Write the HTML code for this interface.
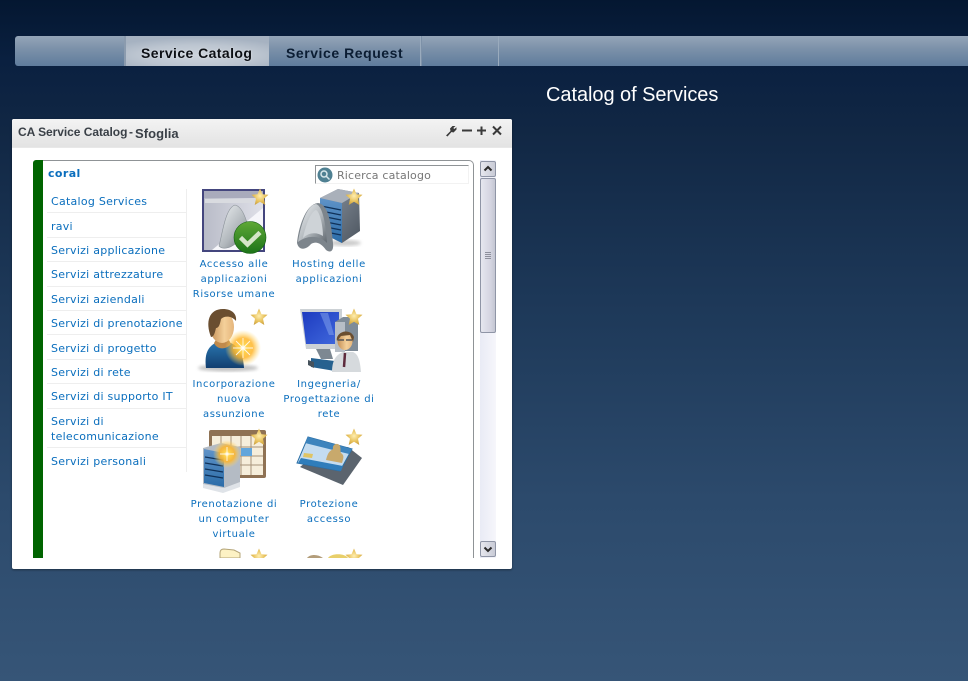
<!DOCTYPE html>
<html><head><meta charset="utf-8"><style>
html,body{margin:0;padding:0}
body{width:968px;height:681px;overflow:hidden;position:relative;background:linear-gradient(180deg,#041731 0,#0a2040 60px,#112744 130px,#1d3858 300px,#2c4a6c 500px,#365577 681px);font-family:"DejaVu Sans",sans-serif}
.abs,.t,.n,.sep{position:absolute}
#nav{position:absolute;left:15px;top:36px;width:953px;height:30px;border-radius:3px 0 0 3px;background:linear-gradient(180deg,#94a5b8 0,#7d92aa 40%,#5f7c9c 100%)}
#tab1{position:absolute;left:124px;top:36px;width:145px;height:30px;background:radial-gradient(ellipse 70% 60% at 50% 65%,#ccd3dc 0,#bcc5d0 60%,#a6b2c1 100%);border-left:2px solid #8b9bae;box-sizing:border-box}
.navt{position:absolute;top:45px;font:bold 14px/16px "Liberation Sans",sans-serif;white-space:nowrap}
.sep{top:36px;width:1px;height:30px;background:#9aabbd}
#title{position:absolute;left:546px;top:83px;color:#fff;font:20px/24px "Liberation Sans",sans-serif;white-space:nowrap;letter-spacing:-.06px}
#win{position:absolute;left:12px;top:119px;width:500px;height:450px;background:#fff;border-radius:2px;box-shadow:0 1px 2px rgba(0,0,0,.4)}
#head{position:absolute;left:0;top:0;width:500px;height:29px;background:linear-gradient(180deg,#f3f3f3,#e3e3e3);border-radius:2px 2px 0 0;border-bottom:1px solid #e8e8e8;box-sizing:border-box}
.ht{position:absolute;font:bold 12px/16px "Liberation Sans",sans-serif;color:#3a4047;white-space:nowrap}
#green{position:absolute;left:33px;top:160px;width:10px;height:398px;background:#006400;border-radius:3px 0 0 0}
#panel{position:absolute;left:43px;top:160px;width:431px;height:398px;border-top:1px solid #8f9396;border-right:1px solid #8f9396;box-sizing:border-box;border-radius:0 5px 0 0}
#search{position:absolute;left:315px;top:165px;width:154px;height:19px;border-top:1px solid #8f9396;border-left:1px solid #8f9396;border-right:1px solid #f2f2f2;border-bottom:1px solid #f2f2f2;box-sizing:border-box}
#search span{position:absolute;left:21px;top:3px;font:11px/14px "DejaVu Sans",sans-serif;color:#777;letter-spacing:.16px;white-space:nowrap}
#coral{position:absolute;left:48px;top:167px;font:bold 11px/14px "DejaVu Sans",sans-serif;color:#0a6ebd;letter-spacing:.4px}
.m{position:absolute;left:51px;font:11px/15px "DejaVu Sans",sans-serif;color:#0a6ebd;white-space:nowrap;letter-spacing:.26px}
.l{position:absolute;left:47px;width:139px;height:1px;background:#eeeeee}
#vl{position:absolute;left:186px;top:189px;width:1px;height:283px;background:#eeeeee}
.n{font:10px/15px "DejaVu Sans",sans-serif;color:#0a6ebd;text-align:center;letter-spacing:.62px;white-space:nowrap;width:100px}
svg{position:absolute;overflow:visible}
#clip{position:absolute;left:190px;top:540px;width:190px;height:18px;overflow:hidden}
#sb{position:absolute;left:480px;top:160px;width:16px;height:398px;background:linear-gradient(90deg,#e9ebf5,#f6f6fb)}
.btn{position:absolute;left:0;width:16px;height:16px;box-sizing:border-box;border:1px solid #8f95a6;border-radius:2px;background:linear-gradient(90deg,#e6e7ee,#c9cbd6)}
#thumb{position:absolute;left:0;top:18px;width:16px;height:155px;box-sizing:border-box;border:1px solid #8f95a6;border-radius:2px;background:linear-gradient(90deg,#e6e7ef,#d3d4e0 70%,#c4c6d2)}
</style></head><body>
<div id="nav"></div><div id="tab1"></div>
<div class="navt" style="left:141px;color:#0c0f14;letter-spacing:.42px;text-shadow:0 0 2px rgba(255,255,255,.5)">Service Catalog</div>
<div class="navt" style="left:286px;color:#0b1d33;letter-spacing:.55px">Service Request</div>
<div class="sep" style="left:420px"></div><div class="sep" style="left:421px;background:#7d91a8"></div><div class="sep" style="left:498px"></div>
<div id="title">Catalog of Services</div>
<div id="win"><div id="head">
<div class="ht" style="left:6px;top:5px;letter-spacing:-.05px">CA Service Catalog</div>
<div class="ht" style="left:117px;top:5px">-</div>
<div class="ht" style="left:123px;top:7px;font-size:13px;letter-spacing:.05px">Sfoglia</div>
<svg style="left:433px;top:6px" width="60" height="12" viewBox="0 0 60 12">
<path d="M1 10.500L5.500 6 5 3.500 7.500 1 10.500 1 8.300 3 9.300 4 11.500 2.300 11.500 4.500 8.500 7.500 6.500 7 2.500 11.500Z" fill="#3a3a3a"/>
<path d="M17 5.500h10" stroke="#3a3a3a" stroke-width="2"/>
<path d="M32 5.500h9M36.500 1.500v8.500" stroke="#3a3a3a" stroke-width="2"/>
<path d="M48 1.500l8 8M56 1.500l-8 8" stroke="#3a3a3a" stroke-width="2"/></svg>
</div></div>
<div id="panel"></div><div id="green"></div>
<div id="search"><svg style="left:1px;top:1px" width="16" height="16"><circle cx="8" cy="8" r="7.500" fill="#4f8092"/><circle cx="7" cy="7" r="3" fill="none" stroke="#d8e6ea" stroke-width="1.500"/><path d="M9 9l3.500 3.500" stroke="#d8e6ea" stroke-width="1.500"/></svg><span>Ricerca catalogo</span></div>
<div id="coral">coral</div>
<div class="m" style="top:194px">Catalog Services</div><div class="l" style="top:212px"></div>
<div class="m" style="top:219px">ravi</div><div class="l" style="top:237px"></div>
<div class="m" style="top:243px">Servizi applicazione</div><div class="l" style="top:261px"></div>
<div class="m" style="top:267px">Servizi attrezzature</div><div class="l" style="top:286px"></div>
<div class="m" style="top:292px">Servizi aziendali</div><div class="l" style="top:310px"></div>
<div class="m" style="top:316px">Servizi di prenotazione</div><div class="l" style="top:334px"></div>
<div class="m" style="top:341px">Servizi di progetto</div><div class="l" style="top:359px"></div>
<div class="m" style="top:365px">Servizi di rete</div><div class="l" style="top:383px"></div>
<div class="m" style="top:389px">Servizi di supporto IT</div><div class="l" style="top:408px"></div>
<div class="m" style="top:414px">Servizi di<br>telecomunicazione</div><div class="l" style="top:447px"></div>
<div class="m" style="top:454px">Servizi personali</div>
<div id="vl"></div>

<svg width="968" height="681" style="left:0;top:0">
<defs>
<linearGradient id="sil" x1="0" y1="0" x2="1" y2="1"><stop offset="0" stop-color="#eef1f3"/><stop offset=".55" stop-color="#b0b6bb"/><stop offset="1" stop-color="#5f676e"/></linearGradient>
<linearGradient id="winbg" x1="0" y1="0" x2="1" y2="0"><stop offset="0" stop-color="#b9bcc8"/><stop offset="1" stop-color="#dfe0e8"/></linearGradient>
<linearGradient id="srv" x1="0" y1="0" x2="0" y2="1"><stop offset="0" stop-color="#5f93c8"/><stop offset="1" stop-color="#2b6ca8"/></linearGradient>
<linearGradient id="side" x1="0" y1="0" x2="1" y2="1"><stop offset="0" stop-color="#8b94a0"/><stop offset="1" stop-color="#4d5660"/></linearGradient>
<linearGradient id="grn" x1="0" y1="0" x2="0" y2="1"><stop offset="0" stop-color="#5fa836"/><stop offset="1" stop-color="#1c7418"/></linearGradient>
<radialGradient id="burst"><stop offset="0" stop-color="#fff"/><stop offset=".2" stop-color="#ffd34c"/><stop offset=".55" stop-color="#ffb52a" stop-opacity=".85"/><stop offset="1" stop-color="#ffd96a" stop-opacity="0"/></radialGradient>
<linearGradient id="blu" x1="0" y1="0" x2="1" y2="1"><stop offset="0" stop-color="#1d3bc0"/><stop offset="1" stop-color="#4068dc"/></linearGradient>
<linearGradient id="shirt" x1="0" y1="0" x2="0" y2="1"><stop offset="0" stop-color="#2a76b0"/><stop offset="1" stop-color="#123f70"/></linearGradient>
<linearGradient id="skin" x1="0" y1="0" x2="1" y2="0"><stop offset="0" stop-color="#c48f55"/><stop offset=".6" stop-color="#f4d09a"/><stop offset="1" stop-color="#e5b57b"/></linearGradient>
<radialGradient id="sg" cx=".5" cy=".45" r=".6"><stop offset="0" stop-color="#ffeeb0"/><stop offset=".6" stop-color="#e6bf58"/><stop offset="1" stop-color="#c79d3f"/></radialGradient>
<path id="star" d="M0-8.500L2.500-2.800 8.500-2.200 4 1.800 5.300 8 0 4.700 -5.300 8 -4 1.800 -8.500-2.200 -2.500-2.800Z" fill="url(#sg)"/>
<filter id="bl"><feGaussianBlur stdDeviation="1.500"/></filter>
</defs>
<!-- Accesso -->
<rect x="202" y="189" width="63" height="63" fill="#44467e"/>
<rect x="204" y="191" width="59" height="59" fill="url(#winbg)"/>
<rect x="204" y="191" width="59" height="7" fill="#a9abbc"/>
<rect x="205" y="199" width="57" height="4" fill="#d9dbe0"/>
<path d="M212 250L263 208V250Z" fill="#f6f6fa"/>
<path d="M219 246C222 236 225 208 235 205 245 207 249 230 252 244 246 240 240 240 235 244 230 248 223 250 219 246Z" fill="url(#sil)" stroke="#8b9299" stroke-width=".6"/>
<circle cx="250" cy="237.500" r="16" fill="url(#grn)" stroke="#155f13" stroke-width=".6"/>
<path d="M240.500 237.500l7 7 12.500-12" fill="none" stroke="#d5e5c8" stroke-width="4.500"/>
<use href="#star" x="260" y="197"/>
<!-- Hosting -->
<ellipse cx="345" cy="243" rx="16" ry="3" fill="#999" opacity=".5" filter="url(#bl)"/>
<path d="M320 198L338 189 359 193 360 231 342 243 320 232Z" fill="url(#side)"/>
<path d="M320 198L342 203 342 243 320 232Z" fill="url(#srv)"/>
<path d="M321 206l20 4M321 211l20 4M321 216l20 4M321 221l20 4M321 226l20 4M321 231l20 4" stroke="#0f3159" stroke-width="1.300"/>
<path d="M320 198L338 189 359 193 342 203Z" fill="#a9b0ba"/>
<path d="M297 243C298 230 305 204 318 203 328 204 331 222 333 243 334 252 330 253 326 250 321 243 316 241 311 244 306 250 299 251 297 243Z" fill="#7d858c"/>
<path d="M298 242C300 229 306 205 316 204 323 206 326 226 327 243 321 236 308 234 298 242Z" fill="url(#sil)"/>
<path d="M303 238C305 228 310 212 316 210 320 212 323 226 323 236 317 232 309 232 303 238Z" fill="#ced3d7"/>
<use href="#star" x="354" y="197"/>
<!-- Incorporazione -->
<ellipse cx="228" cy="368" rx="30" ry="3.500" fill="#999" opacity=".6" filter="url(#bl)"/>
<path d="M206 368C204 352 209 346 217 342L228 342C238 345 243 352 244 368Z" fill="url(#shirt)"/>
<path d="M214 343C217 350 226 350 231 344L228 338H217Z" fill="#c08a4c"/>
<ellipse cx="222" cy="327" rx="12" ry="16" fill="url(#skin)"/>
<path d="M211 337C205 322 209 309 223 309 232 309 237 314 236 321 231 315 224 316 221 319 220 324 219 328 216 328 215 332 214 337 211 337Z" fill="#6a4e30"/>
<circle cx="243" cy="348" r="18" fill="url(#burst)"/>
<path d="M243 338v20M233 348h20M236 341l14 14M250 341l-14 14" stroke="#fff" stroke-width=".9" opacity=".85"/>
<use href="#star" x="259" y="317"/>
<!-- Ingegneria -->
<path d="M300 309H342V349H306Z" fill="#ccd1d5"/>
<path d="M302 312L339 312 339 344 306 344Z" fill="url(#blu)"/>
<path d="M320 313l8 0 6 22-5 0Z" fill="#86a6ee" opacity=".5"/>
<path d="M316 349h14l3 10h-12z" fill="#7d8892"/><path d="M311 358l24 3v10l-24-4Z" fill="#26618f"/><path d="M314 368l-6-3v-5l6 2Z" fill="#46525c"/>
<path d="M335 322l8-5h15v34h-23Z" fill="#7f8c98"/>
<path d="M335 322h10v30h-10Z" fill="#b7bec6"/>
<path d="M332 372C332 358 338 354 343 352H353C358 354 360 360 361 372Z" fill="#d6dadd"/>
<ellipse cx="345" cy="341" rx="7.500" ry="9" fill="url(#skin)"/>
<path d="M337 341C335 332 350 327 354 337L353 342 350 335 341 336Z" fill="#6a4e30"/>
<path d="M338 340h6M346 340h6" stroke="#555" stroke-width="1.500"/>
<path d="M345 353l-1 14" stroke="#5d2a3c" stroke-width="2.500"/>
<use href="#star" x="354" y="317"/>
<!-- Prenotazione -->
<rect x="209" y="430" width="57" height="48" rx="2" fill="#8f7254"/>
<rect x="212" y="436" width="51" height="39" fill="#f6eedb"/>
<path d="M221 436v39M231 436v39M241 436v39M251 436v39M212 447h51M212 456h51M212 465h51" stroke="#a7937a" stroke-width="1"/>
<rect x="241" y="448" width="11" height="8" fill="#62a6dc"/>
<path d="M203 448L221 443 240 447 240 486 223 492 203 487Z" fill="#b4bbc4"/>
<path d="M204 449L224 453V487L204 483Z" fill="url(#srv)"/>
<path d="M205 457l18 3M205 463l18 3M205 469l18 3M205 475l18 3" stroke="#0f3159" stroke-width="1.300"/>
<path d="M203 484L224 488 240 482 240 487 223 493 203 488Z" fill="#dfe3e8"/>
<circle cx="227" cy="454" r="14" fill="url(#burst)"/>
<path d="M227 447v14M220 454h14" stroke="#fff" stroke-width=".9" opacity=".85"/>
<use href="#star" x="259" y="437"/>
<!-- Protezione -->
<path d="M306 462L348 447 362 458 343 485 300 467Z" fill="#5b646e"/>
<path d="M308 437L352 449 340 471 297 463Z" fill="#c4dcf0" stroke="#2a6ea5" stroke-width="1"/>
<path d="M308 437L352 449 349 454 305 443Z" fill="#3d84bd"/>
<path d="M298 463L341 471 343 466 301 458Z" fill="#2f7dbb"/>
<path d="M326 460C328 452 330 451 333 449 332 444 338 442 340 446 341 450 340 451 341 453 344 455 344 457 342 463Z" fill="#c8a96c"/>
<path d="M304 453l9 1-1 4-9-1Z" fill="#e0c463"/>
<use href="#star" x="354" y="437"/>
</svg>
<div id="clip"><svg width="190" height="18" style="left:0;top:0">
<path d="M30 13C30 11 31 9 34 9L44 10 50 13V18H30Z" fill="#fdf2c4" stroke="#b4a477"/>
<use href="#star" x="69" y="17"/>
<path d="M117 18C120 14 128 14 133 18Z" fill="#b39d7a"/>
<path d="M138 18C141 13 155 13 158 18Z" fill="#e8cf6a"/>
<use href="#star" x="164" y="17"/>
</svg></div>

<div class="n" style="left:184px;top:257px">Accesso alle<br>applicazioni<br>Risorse umane</div>
<div class="n" style="left:279px;top:257px">Hosting delle<br>applicazioni</div>
<div class="n" style="left:184px;top:377px">Incorporazione<br>nuova<br>assunzione</div>
<div class="n" style="left:279px;top:377px">Ingegneria/<br>Progettazione di<br>rete</div>
<div class="n" style="left:184px;top:497px">Prenotazione di<br>un computer<br>virtuale</div>
<div class="n" style="left:279px;top:497px">Protezione<br>accesso</div>

<div id="sb">
<div class="btn" style="top:1px"><svg width="14" height="14" style="left:0;top:0"><path d="M3.500 8.500L7 5l3.500 3.500" fill="none" stroke="#2b2b2b" stroke-width="2"/></svg></div>
<div id="thumb"><svg width="14" height="10" style="left:0;top:71px"><path d="M4 2.500h6M4 4.500h6M4 6.500h6M4 8.500h6" stroke="#8d909c"/></svg></div>
<div class="btn" style="top:381px"><svg width="14" height="14" style="left:0;top:0"><path d="M3.500 5.500L7 9l3.500-3.500" fill="none" stroke="#2b2b2b" stroke-width="2"/></svg></div>
</div>
</body></html>
